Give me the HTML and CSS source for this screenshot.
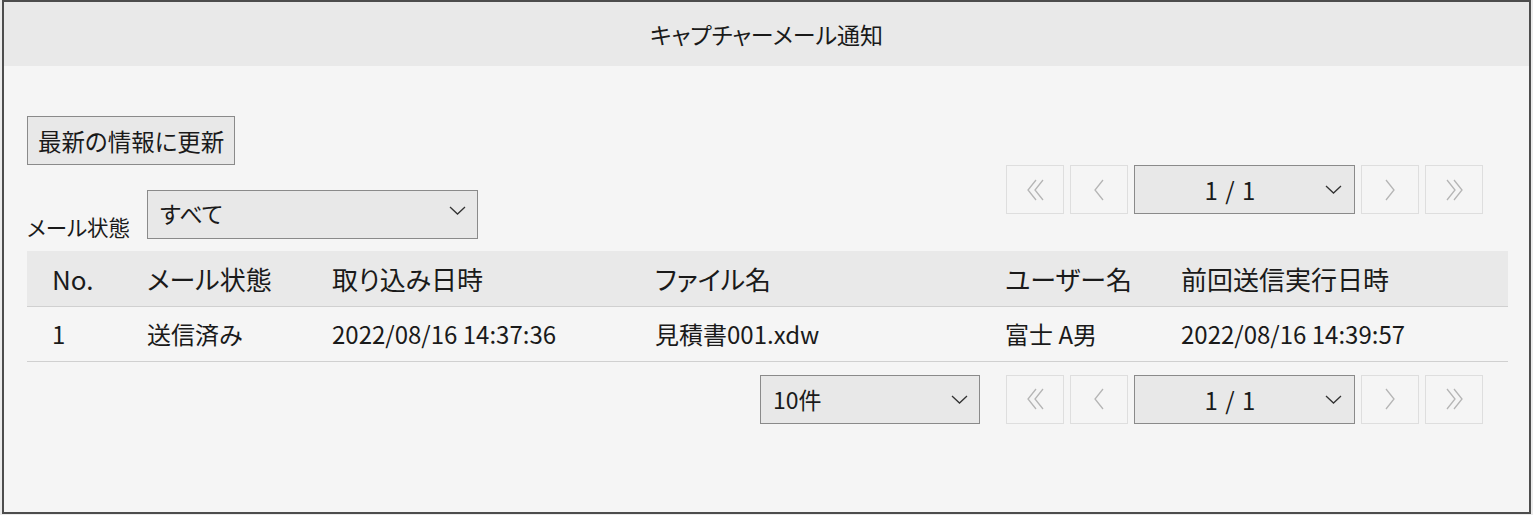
FILE: index.html
```html
<!DOCTYPE html>
<html lang="ja">
<head>
    <meta charset="UTF-8">
    <meta name="viewport" content="width=device-width, initial-scale=1.0">
    <title>キャプチャーメール通知</title>
    <link rel="stylesheet" href="styles.css">
</head>
<body>
    <div class="window">
        <div class="title-bar">キャプチャーメール通知</div>

        <div class="content">
            <div class="toolbar">
                <div class="toolbar-left">
                    <button type="button" class="btn">最新の情報に更新</button>
                    <div class="filter">
                        <span class="filter-label">メール状態</span>
                        <div class="select select-status">
                            <span class="select-text">すべて</span>
                            <svg class="caret" width="17" height="9" viewBox="0 0 17 9"><polyline points="1,1 8.5,8 16,1" /></svg>
                        </div>
                    </div>
                </div>

                <div class="pager pager-top">
                    <div class="page-btn"><svg width="17" height="22" viewBox="0 0 17 22"><polyline points="9,1 1,11 9,21" /><polyline points="16,1 8,11 16,21" /></svg></div>
                    <div class="page-btn"><svg width="10" height="22" viewBox="0 0 10 22"><polyline points="9,1 1,11 9,21" /></svg></div>
                    <div class="select select-page">
                        <span class="select-text">1 / 1</span>
                        <svg class="caret" width="17" height="9" viewBox="0 0 17 9"><polyline points="1,1 8.5,8 16,1" /></svg>
                    </div>
                    <div class="page-btn"><svg width="10" height="22" viewBox="0 0 10 22"><polyline points="1,1 9,11 1,21" /></svg></div>
                    <div class="page-btn"><svg width="17" height="22" viewBox="0 0 17 22"><polyline points="1,1 9,11 1,21" /><polyline points="8,1 16,11 8,21" /></svg></div>
                </div>
            </div>

            <table class="mail-table">
                <thead>
                    <tr>
                        <th class="col-no">No.</th>
                        <th class="col-status">メール状態</th>
                        <th class="col-date">取り込み日時</th>
                        <th class="col-file">ファイル名</th>
                        <th class="col-user">ユーザー名</th>
                        <th class="col-sent">前回送信実行日時</th>
                    </tr>
                </thead>
                <tbody>
                    <tr>
                        <td>1</td>
                        <td>送信済み</td>
                        <td>2022/08/16 14:37:36</td>
                        <td>見積書001.xdw</td>
                        <td>富士 A男</td>
                        <td>2022/08/16 14:39:57</td>
                    </tr>
                </tbody>
            </table>

            <div class="footer-bar">
                <div class="select select-count">
                    <span class="select-text">10件</span>
                    <svg class="caret" width="17" height="9" viewBox="0 0 17 9"><polyline points="1,1 8.5,8 16,1" /></svg>
                </div>
                <div class="pager">
                    <div class="page-btn"><svg width="17" height="22" viewBox="0 0 17 22"><polyline points="9,1 1,11 9,21" /><polyline points="16,1 8,11 16,21" /></svg></div>
                    <div class="page-btn"><svg width="10" height="22" viewBox="0 0 10 22"><polyline points="9,1 1,11 9,21" /></svg></div>
                    <div class="select select-page">
                        <span class="select-text">1 / 1</span>
                        <svg class="caret" width="17" height="9" viewBox="0 0 17 9"><polyline points="1,1 8.5,8 16,1" /></svg>
                    </div>
                    <div class="page-btn"><svg width="10" height="22" viewBox="0 0 10 22"><polyline points="1,1 9,11 1,21" /></svg></div>
                    <div class="page-btn"><svg width="17" height="22" viewBox="0 0 17 22"><polyline points="1,1 9,11 1,21" /><polyline points="8,1 16,11 8,21" /></svg></div>
                </div>
            </div>
        </div>
    </div>
</body>
</html>
```

FILE: styles.css
```css
* {
    box-sizing: border-box;
}
body {
    margin: 0;
    background-color: #ececec;
    font-family: 'Noto Sans CJK JP', 'Noto Sans', sans-serif;
    font-feature-settings: "palt";
    color: #1a1a1a;
}
.window {
    margin-left: 2px;
    width: 1529px;
    height: 514px;
    border: 2px solid #4d4d4d;
    background-color: #f5f5f5;
}
.title-bar {
    height: 64px;
    line-height: 64px;
    text-align: center;
    background-color: #e9e9e9;
    font-size: 23px;
}
.content {
    padding: 50px 21px 0 23px;
}
.toolbar {
    display: flex;
    justify-content: space-between;
}
.toolbar-left {
    display: flex;
    flex-direction: column;
    align-items: flex-start;
    gap: 25px;
}
.btn {
    height: 49px;
    padding: 0 10px;
    border: 1px solid #8a8a8a;
    background-color: #e8e8e8;
    font-family: inherit;
    font-feature-settings: "palt";
    font-size: 23.5px;
    color: #1a1a1a;
}
.filter {
    display: flex;
    align-items: flex-end;
}
.filter-label {
    font-size: 21.5px;
    width: 120px;
    line-height: 26px;
    margin-bottom: -1px;
}
.select {
    display: flex;
    align-items: center;
    height: 49px;
    border: 1px solid #8a8a8a;
    background-color: #e8e8e8;
    font-size: 23px;
    padding: 0 11px 0 12px;
}
.select-text {
    flex: 1;
}
.caret polyline {
    fill: none;
    stroke: #333;
    stroke-width: 1.3;
}
.select-status {
    width: 331px;
    padding-bottom: 4px;
}
.select-status .caret {
    margin-bottom: 4px;
}
.select-count {
    width: 220px;
}
.select-page {
    width: 221px;
    padding-left: 0;
    padding-right: 12px;
    font-size: 24px;
}
.select-page .select-text {
    text-align: center;
    word-spacing: 2px;
}
.pager {
    display: flex;
    gap: 6px;
    margin-right: 25px;
}
.pager-top {
    margin-top: 49px;
}
.page-btn {
    width: 58px;
    height: 49px;
    border: 1px solid #dedede;
    display: flex;
    align-items: center;
    justify-content: center;
}
.page-btn polyline {
    fill: none;
    stroke: #b5b5b5;
    stroke-width: 1.3;
}
.mail-table {
    width: 100%;
    margin-top: 12px;
    border-collapse: collapse;
}
.mail-table th,
.mail-table td {
    text-align: left;
    padding: 0 0 0 25px;
    font-weight: normal;
    border-bottom: 1px solid #d0d0d0;
}
.mail-table th {
    height: 55px;
    background-color: #e9e9e9;
    font-size: 26px;
}
.mail-table td {
    height: 55px;
    font-size: 24px;
}
.col-no { width: 95px; }
.col-status { width: 185px; }
.col-date { width: 323px; }
.col-file { width: 350px; }
.col-user { width: 176px; }
.footer-bar {
    display: flex;
    justify-content: flex-end;
    gap: 26px;
    margin-top: 13px;
}
```
